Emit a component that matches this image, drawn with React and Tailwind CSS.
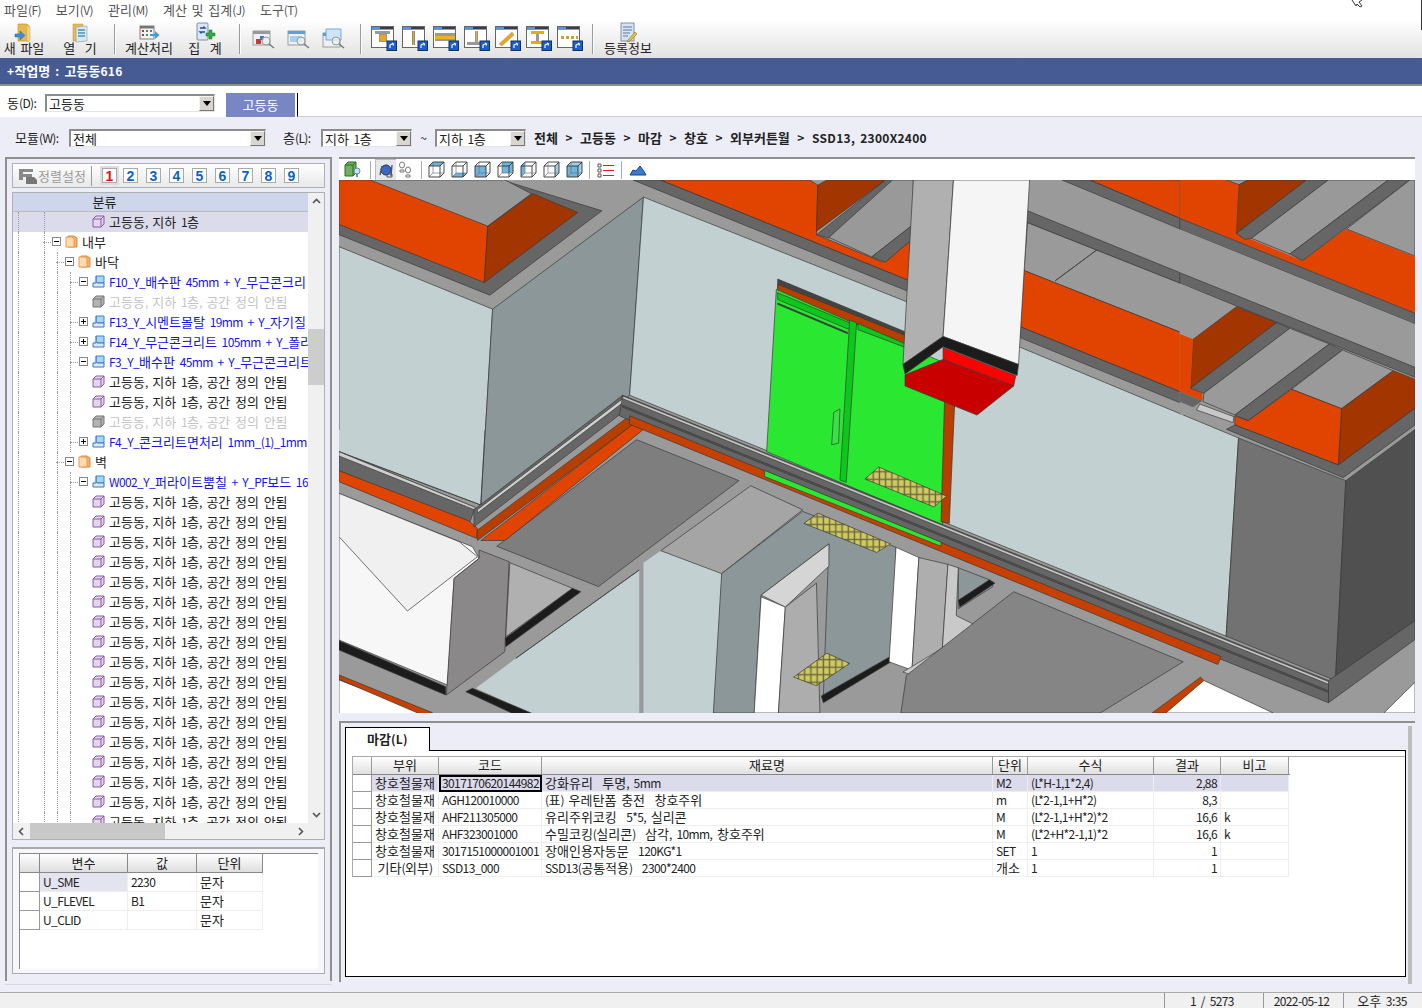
import React from "react";

// Korean at 13px is 12px wide per glyph, latin squeezed down to half of that
const T = ({ children, bold }) =>
  String(children)
    .split(/([\uAC00-\uD7A3]+)/)
    .map((part, i) =>
      i % 2 ? (
        <span key={i} className="text-[13px]">{part}</span>
      ) : (
        <span key={i} className={bold ? "tracking-[0.3px] [word-spacing:2px]" : "tracking-[-0.6px] [word-spacing:2.6px]"}>{part}</span>
      )
    );

const Combo = ({ label, w }) => (
  <div className={`flex h-[18px] items-stretch border border-t-2 border-l-2 border-[#8c8c8c] border-b-[#e4e4e4] border-r-[#e4e4e4] bg-white ${w}`}>
    <span className="flex-1 pl-[2px] leading-[15px] whitespace-nowrap"><T>{label}</T></span>
    <span className="flex w-[15px] items-center justify-center bg-[#d8d6cf] border border-[#f4f4f4] border-r-[#777] border-b-[#777]">
      <span className="block h-0 w-0 border-x-[4px] border-t-[5px] border-x-transparent border-t-black" />
    </span>
  </div>
);

const Sep = () => <div className="h-[30px] w-[2px] border-l border-[#9a9a9a] bg-white" />;

const Chevron = ({ d }) => (
  <svg width="9" height="9" viewBox="0 0 9 9">
    <path d={d} fill="none" stroke="#555" strokeWidth="1.600" />
  </svg>
);

const NewFileIcon = () => (
  <svg width="22" height="22" viewBox="0 0 22 22">
    <path d="M5 2h9l2 2v15H5z" fill="#e8b850" stroke="#c08a20" strokeWidth=".6" />
    <path d="M14 3l3 2v13l-3 2z" fill="#f4d68a" stroke="#c9a050" strokeWidth=".5" />
    <path d="M2 12h5V9l5 4.500L7 18v-3H2z" fill="#3d8fdc" stroke="#1f66a8" strokeWidth=".5" />
  </svg>
);

const OpenIcon = () => (
  <svg width="22" height="22" viewBox="0 0 22 22">
    <path d="M4 2h10v17H4z" fill="#e6b95a" stroke="#c09030" strokeWidth=".5" />
    <path d="M7 5l11-1v15l-11 1z" fill="#d8e8ec" stroke="#8aa0a8" strokeWidth=".6" />
    <path d="M9 7h7v2H9zm0 3h7v2H9zm0 3h7v2H9z" fill="#68a8c8" />
  </svg>
);

const CalcIcon = () => (
  <svg width="24" height="22" viewBox="0 0 24 22">
    <rect x="3" y="4" width="14" height="13" fill="#f4f4f4" stroke="#666" strokeWidth=".8" />
    <path d="M3 4h14v2.500H3z" fill="#777" />
    <path d="M5 8h2v2H5zM5 12h2v2H5z" fill="#c03030" />
    <path d="M9 8h2v2H9zM9 12h2v2H9z" fill="#3a9a4a" />
    <path d="M13 8h2v2h-2z" fill="#6868c0" />
    <path d="M13 12h5v-3l4.500 4-4.500 4v-3h-5z" fill="#3d9be0" />
  </svg>
);

const SumIcon = () => (
  <svg width="22" height="22" viewBox="0 0 22 22">
    <rect x="3" y="1" width="11" height="17" rx="1" fill="#dce6f4" stroke="#6a7890" strokeWidth=".8" />
    <path d="M6 6h5l-1.500-1.500M11 10H6l1.500 1.500" fill="none" stroke="#1a4fb0" strokeWidth="1.300" />
    <path d="M12 11h3V8h3v3h3v3h-3v3h-3v-3h-3z" fill="#28b040" stroke="#14702a" strokeWidth=".5" />
  </svg>
);

const SearchWin = ({ kind }) => (
  <svg width="24" height="22" viewBox="0 0 24 22">
    <rect x="1" y={kind === 2 ? 5 : 3} width="17" height="14" fill="#eef0f2" stroke="#888" strokeWidth=".8" />
    <path d={kind === 2 ? "M1 5h17v3H1z" : "M1 3h17v3H1z"} fill={kind === 0 ? "#999" : "#5aa0dc"} />
    {kind === 0 && <path d="M4 11h5v5H4z" fill="#c83838" />}
    {kind === 0 && <path d="M8 8h4v4H8z" fill="#3a78c8" />}
    {kind === 1 && <path d="M3 8h12v6H3z" fill="#a8cfee" />}
    {kind === 2 && <path d="M4 1h15v11H4z" fill="#cfe4f6" stroke="#4a90d0" strokeWidth=".7" />}
    <circle cx="14" cy="13" r="4" fill="#e8f0e8" fillOpacity=".8" stroke="#999" />
    <path d="M17 16l5 4" stroke="#777" strokeWidth="1.500" />
  </svg>
);

const MemberIcon = ({ children }) => (
  <svg width="26" height="27" viewBox="0 0 26 27">
    <rect x=".5" y=".5" width="22" height="21" fill="#fff" stroke="#666" />
    <path d="M1 1h21v2.500H1z" fill="#3a3a4a" />
    <path d="M1 1h8v2.500H1z" fill="#5a90d8" />
    {children}
    <rect x="16" y="15" width="9.500" height="9.500" fill="#1d5fc8" stroke="#12305c" />
    <path d="M19 22l0-3 3-1.500M21 17l1.500 1-.5 1.500" fill="none" stroke="#fff" strokeWidth="1.100" />
  </svg>
);

const memberIcons = [
  <>
    <path d="M4 5h15v3H4zM8 8h8v8H8z" fill="#999" />
    <path d="M9 9h6v6H9z" fill="#e8a818" />
  </>,
  <>
    <path d="M10 5h3v14h-3z" fill="#8a8a8a" />
    <path d="M11 5h1v14h-1z" fill="#e8a818" />
  </>,
  <>
    <path d="M2 7h20v3H2zM2 12h20v3H2z" fill="#999" />
    <path d="M2 10h20v3H2z" fill="#f0b020" />
  </>,
  <>
    <path d="M11 5h3v11h-3zM3 16h18v3H3z" fill="#999" />
    <path d="M12 5h1v11h-1z" fill="#e8a818" />
  </>,
  <path d="M4 18L17 6l2 3L7 20z" fill="#e8a818" stroke="#999" strokeWidth=".5" />,
  <>
    <path d="M5 5h13v3H5zM5 15h13v3H5z" fill="#e8a818" />
    <path d="M10 8h3v7h-3z" fill="#999" />
  </>,
  <path d="M4 10h3v3H4zm5 0h3v3H9zm5 0h3v3h-3zm5 0h2v3h-2z" fill="#c8a048" />,
];

const RegisterIcon = () => (
  <svg width="22" height="22" viewBox="0 0 22 22">
    <rect x="4" y="1" width="13" height="18" fill="#d8e4f2" stroke="#6a7a90" strokeWidth=".8" />
    <path d="M6 5h9M6 8h9M6 11h7M6 14h5" stroke="#5878a0" />
    <path d="M11 18l7-8 2 2-7 7-3 1z" fill="#e8c040" stroke="#806010" strokeWidth=".5" />
  </svg>
);

const TextBtn = ({ icon, label, cls }) => (
  <div className={`flex w-[48px] flex-col items-center whitespace-pre ${cls}`}>
    <div className="flex h-[19px] items-center">{icon}</div>
    <span className="-mt-px leading-[14px]"><T>{label}</T></span>
  </div>
);

const Toolbar = () => (
  <div className="flex h-[38px] shrink-0 items-center bg-gradient-to-b from-white to-[#e2e2e2]">
    <TextBtn icon={<NewFileIcon />} label="새 파일" />
    <TextBtn icon={<OpenIcon />} label={"열  기"} cls="ml-[8px]" />
    <div className="ml-[10px]"><Sep /></div>
    <TextBtn icon={<CalcIcon />} label="계산처리" cls="ml-[9px]" />
    <TextBtn icon={<SumIcon />} label={"집  계"} cls="ml-[8px]" />
    <div className="ml-[10px]"><Sep /></div>
    <div className="ml-[11px] flex gap-[11px]">
      <SearchWin kind={0} />
      <SearchWin kind={1} />
      <SearchWin kind={2} />
    </div>
    <div className="ml-[14px]"><Sep /></div>
    <div className="ml-[9px] flex gap-[5px]">
      {memberIcons.map((m, i) => (
        <MemberIcon key={i}>{m}</MemberIcon>
      ))}
    </div>
    <div className="ml-[9px]"><Sep /></div>
    <TextBtn icon={<RegisterIcon />} label="등록정보" cls="ml-[10px]" />
  </div>
);

const Cube = ({ face }) => {
  const blue = "#6fb4dc";
  return (
    <svg width="17" height="17" viewBox="0 0 17 17">
      <path d="M1 5h11v11H1z" fill={face === "front" || face === "all" ? blue : "none"} />
      <path d="M1 5l4-4h11l-4 4z" fill={face === "top" ? blue : face === "all" ? "#9fd0ea" : "none"} />
      <path d="M12 5l4-4v11l-4 4z" fill={face === "right" || face === "all" ? "#9fd0ea" : "none"} />
      <path d="M1 16l4-4h11l-4 4z" fill={face === "bottom" ? blue : "none"} />
      <path d="M5 1h11v11H5z" fill={face === "back" ? blue : "none"} />
      <path d="M1 5v11l4-4V1z" fill={face === "left" ? blue : "none"} />
      <path d="M1 5h11v11H1zM1 5l4-4h11v11l-4 4M12 5l4-4" fill="none" stroke="#333" strokeWidth=".9" />
      <path d="M5 1v11H16M5 12l-4 4" fill="none" stroke="#666" strokeWidth=".6" />
    </svg>
  );
};

const ViewToolbar = () => (
  <div className="flex h-[23px] shrink-0 items-center bg-white border-t-2 border-[#8f8f8f]">
    <svg width="18" height="18" viewBox="0 0 18 18" className="ml-[5px]">
      <path d="M1 4l3-3h8v11l-3 3H1z" fill="#6fb060" stroke="#2a6a24" />
      <path d="M1 4h8v11M9 4l3-3" fill="none" stroke="#2a6a24" />
      <circle cx="13" cy="10" r="3" fill="#cde4f4" stroke="#5a88b0" />
      <path d="M12 13h2v3h-2z" fill="#888" />
    </svg>
    <div className="ml-[8px] h-[18px] border-l border-[#aaa]" />
    <div className="flex h-[21px] w-[21px] ml-[4px] items-center justify-center bg-[#e8e8e8] border-l border-t border-[#bbb]">
      <svg width="18" height="18" viewBox="0 0 18 18">
        <circle cx="9" cy="9" r="5" fill="#3a6ac8" stroke="#1a3070" />
        <path d="M3 14l2-9M15 4l-1 11" fill="none" stroke="#555" strokeWidth="1.400" />
        <path d="M10 13h5v3h-5z" fill="none" stroke="#555" />
      </svg>
    </div>
    <svg width="16" height="18" viewBox="0 0 16 18" className="ml-[1px]">
      <ellipse cx="5" cy="4" rx="2.500" ry="3" fill="none" stroke="#777" />
      <path d="M3 9h4v2H3z" fill="none" stroke="#777" />
      <ellipse cx="11" cy="9" rx="2.500" ry="3" fill="none" stroke="#777" />
      <path d="M9 14h4v2H9z" fill="none" stroke="#777" />
    </svg>
    <div className="ml-[8px] h-[18px] border-l border-[#aaa]" />
    <div className="ml-[6px] flex gap-[6px]">
      {["top", "bottom", "front", "back", "left", "right", "all"].map((f) => (
        <Cube key={f} face={f} />
      ))}
    </div>
    <div className="ml-[6px] h-[18px] border-l border-[#aaa]" />
    <svg width="18" height="16" viewBox="0 0 18 16" className="ml-[7px]">
      <path d="M1 2h3v3H1zM1 7h3v3H1zM1 12h3v3H1z" fill="none" stroke="#555" />
      <path d="M6 3.500h11M6 8.500h11M6 13.500h11" stroke="#e02020" />
    </svg>
    <div className="ml-[6px] h-[18px] border-l border-[#aaa]" />
    <svg width="18" height="12" viewBox="0 0 18 12" className="ml-[7px]">
      <path d="M1 11l3-5 3 1 4-5 3 4 3 5z" fill="#3a7ad0" stroke="#14408c" />
    </svg>
  </div>
);

const Box = ({ open }) => (
  <span className="relative z-10 flex h-[9px] w-[9px] items-center justify-center border border-[#888] bg-white">
    <span className="absolute h-px w-[5px] bg-black" />
    {!open && <span className="absolute h-[5px] w-px bg-black" />}
  </span>
);

const Leaf = ({ grey }) => (
  <svg width="13" height="13" viewBox="0 0 13 13">
    <path d="M1 4l3-3h8v8l-3 3H1z" fill={grey ? "#b4b4b4" : "#e4d4f0"} stroke={grey ? "#777" : "#8a5aa0"} />
    <path d="M1 4h8v8M9 4l3-3" fill="none" stroke={grey ? "#777" : "#8a5aa0"} />
  </svg>
);

const Folder = () => (
  <svg width="13" height="13" viewBox="0 0 13 13">
    <path d="M3 1h6l3 2v9H3z" fill="#f4b070" stroke="#e08840" />
    <path d="M1 2h6l2 2v8H1z" fill="#ffdcb0" stroke="#ec9850" />
  </svg>
);

const Layer = () => (
  <svg width="13" height="13" viewBox="0 0 13 13">
    <path d="M4 1h8v7H4z" fill="#a8d4f4" stroke="#3a88c8" />
    <path d="M1 8h3V1M1 8v4h11V8H5" fill="#dbe6f6" stroke="#3a78b8" />
  </svg>
);

const L = "고등동, 지하 1층, 공간 정의 안됨";
const treeRows = [
  { t: "고등동, 지하 1층", k: "leaf", sel: true, g: [18, 44] },
  { t: "내부", k: "folder", x: 39, open: true, g: [18, 44] },
  { t: "바닥", k: "folder", x: 52, open: true, g: [18, 44, 57] },
  { t: "F10_Y_배수판 45mm + Y_무근콘크리", k: "layer", x: 66, open: true },
  { t: L, k: "leaf", grey: true },
  { t: "F13_Y_시멘트몰탈 19mm + Y_자기질", k: "layer", x: 66 },
  { t: "F14_Y_무근콘크리트 105mm + Y_폴리", k: "layer", x: 66 },
  { t: "F3_Y_배수판 45mm + Y_무근콘크리트", k: "layer", x: 66, open: true },
  { t: L, k: "leaf" },
  { t: L, k: "leaf" },
  { t: L, k: "leaf", grey: true },
  { t: "F4_Y_콘크리트면처리 1mm_(1)_1mm", k: "layer", x: 66 },
  { t: "벽", k: "folder", x: 52, open: true, g: [18, 44, 57] },
  { t: "W002_Y_퍼라이트뿜칠 + Y_PF보드 16", k: "layer", x: 66, open: true },
  ...Array.from({ length: 17 }, () => ({ t: L, k: "leaf" })),
];

const TreeRow = ({ r }) => {
  const guides = r.g || [18, 44, 57, 70];
  const isBranch = r.k !== "leaf";
  const iconLeft = r.k === "leaf" ? 79 : r.x + 13;
  return (
    <div className={`relative flex h-[20px] shrink-0 items-center whitespace-nowrap ${r.sel ? "bg-[#dbdbec]" : ""}`}>
      {guides.map((x) => (
        <span
          key={x}
          className="absolute top-0 h-[20px] border-l border-dotted border-[#999]"
          style={{ left: x - 13 }}
        />
      ))}
      {isBranch && (
        <span className="absolute top-[10px] w-[10px] border-t border-dotted border-[#999]" style={{ left: r.x - 9 }} />
      )}
      {isBranch && (
        <span className="absolute top-[5px]" style={{ left: r.x }}>
          <Box open={r.open} />
        </span>
      )}
      <span className="absolute top-[3px]" style={{ left: iconLeft }}>
        {r.k === "leaf" && <Leaf grey={r.grey} />}
        {r.k === "folder" && <Folder />}
        {r.k === "layer" && <Layer />}
      </span>
      <span
        className={`absolute ${r.grey ? "text-[#c4c4c4]" : r.k === "layer" ? "text-[#1414e0]" : "text-[#222]"}`}
        style={{ left: iconLeft + 17 }}
      >
        <T>{r.t}</T>
      </span>
    </div>
  );
};

const LeftPanel = () => (
  <div className="flex h-[824px] w-[327px] shrink-0 flex-col border-x-2 border-t-2 border-[#8f8f8f] px-[5px] pt-[4px]">
    <div className="flex h-[25px] shrink-0 items-center border border-[#b0b0b0] bg-gradient-to-b from-white to-[#e8e8e8] pl-[5px]">
      <svg width="20" height="18" viewBox="0 0 20 18">
        <path d="M1 2h14v3H5v2h9v3H5v3H1z" fill="#888" />
        <path d="M8 10h8l3 3v4H8z" fill="#777" />
      </svg>
      <span className="w-[48px] text-[#9a9a9a]"><T>정렬설정</T></span>
      <div className="ml-[5px] h-[20px] border-l border-[#999]" />
      <div className="ml-[10px] flex items-center gap-[8px]">
        {[1, 2, 3, 4, 5, 6, 7, 8, 9].map((n) => (
          <span
            key={n}
            className={`flex h-[15px] w-[15px] items-center justify-center border border-[#aaa] bg-white font-['Liberation_Sans',sans-serif] text-[14px] font-bold ${n === 1 ? "-mr-[2px] text-[#e81010] outline-2 outline-[#ddd]" : "text-[#0a64c0]"}`}
          >
            {n}
          </span>
        ))}
      </div>
    </div>
    <div className="mt-[4px] flex h-[648px] shrink-0 flex-col border border-[#b0b0b0] bg-[#f0f0f0]">
      <div className="flex min-h-0 flex-1">
        <div className="flex min-w-0 flex-1 flex-col overflow-hidden bg-white">
          <div className="flex h-[19px] shrink-0 items-center justify-center bg-[#cdd6ea] pr-[112px] border-b border-[#bbb]"><span><T>분류</T></span></div>
          {treeRows.map((r, i) => (
            <TreeRow key={i} r={r} />
          ))}
        </div>
        <div className="relative flex w-[16px] shrink-0 flex-col items-center justify-between bg-[#f0f0f0] py-[4px]">
          <Chevron d="M1 6l3.500-3.500L8 6" />
          <span className="absolute left-0 top-[136px] h-[56px] w-[16px] bg-[#cdcdcd]" />
          <Chevron d="M1 3l3.500 3.500L8 3" />
        </div>
      </div>
      <div className="flex h-[16px] shrink-0 items-center bg-[#f0f0f0]">
        <span className="flex w-[17px] justify-center"><Chevron d="M6 1L2.500 4.500 6 8" /></span>
        <span className="h-[16px] w-[135px] bg-[#c8c8c8]" />
        <span className="ml-auto mr-[19px] flex"><Chevron d="M3 1l3.500 3.500L3 8" /></span>
      </div>
    </div>
    <div className="mt-[7px] h-[127px] shrink-0 border-t-2 border-l border-r border-b border-[#aaa] bg-[#f6f6fb] px-[6px] pt-[4px]">
      <div className="h-[116px] border-l border-t border-[#888] bg-white">
        <div className="grid w-[243px] grid-cols-[20px_88px_69px_66px]">
          {["", "변수", "값", "단위"].map((h, i) => (
            <div key={i} className="flex h-[19px] items-center justify-center bg-gradient-to-b from-white to-[#dedede] border-r border-b border-[#888]"><span><T>{h}</T></span></div>
          ))}
          {[
            ["U_SME", "2230", "문자"],
            ["U_FLEVEL", "B1", "문자"],
            ["U_CLID", "", "문자"],
          ].map((r, i) => (
            <React.Fragment key={i}>
              <div className="h-[19px] border-r border-b border-[#999]" />
              <div className={`flex h-[19px] items-center border-r border-b border-[#eee] pl-[3px] ${i === 0 ? "bg-[#e4e4f0]" : ""}`}><span><T>{r[0]}</T></span></div>
              <div className="flex h-[19px] items-center border-r border-b border-[#eee] pl-[3px]"><span><T>{r[1]}</T></span></div>
              <div className="flex h-[19px] items-center border-r border-b border-[#eee] pl-[3px]"><span><T>{r[2]}</T></span></div>
            </React.Fragment>
          ))}
        </div>
      </div>
    </div>
  </div>
);

const P = ({ p, f, s }) => (
  <polygon points={p} fill={f} stroke={s === false ? "none" : "#3a3a3a"} strokeWidth=".7" vectorEffect="non-scaling-stroke" />
);

const drawList = (list) => list.map(([p, f, s], i) => <P key={i} p={p} f={f} s={s} />);

const wallShapes = [
  ["235,0 380,90 218,337 0,160 0,0", "#666"],
  ["0,0 60,0 215,135 210,300 0,130", "#e04400"],
  ["45,0 240,0 278,40 215,135 45,0", "#999"],
  ["215,135 280,40 345,95 210,300", "#a33600"],
  ["425,0 465,0 825,295 825,328", "#666"],
  ["465,0 680,0 692,15 690,160 785,240 825,180 825,295", "#e04400"],
  ["692,15 705,0 790,0 690,150", "#a33600"],
  ["790,0 810,0 708,170 690,160", "#666"],
  ["800,0 830,0 830,130 770,225 708,168", "#999"],
  ["770,225 830,130 830,170 790,240", "#666"],
  ["1085,0 1215,0 1215,112", "#e04400"],
  ["1045,0 1085,0 1215,112 1215,143", "#666"],
  ["995,90 1215,271 1215,302 995,125", "#666"],
  ["995,125 1300,370 1240,465 990,265", "#9a9a9a"],
  ["1095,205 1035,295", "none"],
  ["990,265 1240,465 1235,605 1252,622 1252,650 985,430", "#e04400"],
  ["985,430 1252,650 1252,682 985,462", "#666"],
  ["0,195 222,378 205,955 0,795", "#c2d0d2"],
  ["222,378 440,50 420,630 205,955", "#8c9799"],
  ["440,50 825,360 985,490 1300,755 1282,1335 420,630", "#c2d0d2"],
];

// lower left corner, in 3x page pixels from (340,430)
const cornerShapes = [
  ["0,0 438,0 425,225 0,65", "#c2d0d2", false],
  ["438,0 720,0 425,225", "#8c9799", false],
  ["0,65 425,225", "none"],
  ["438,0 425,225", "none"],
  ["0,65 408,232 388,288 0,122", "#666"],
  ["0,65 408,232 408,240 0,78", "#cfcfcf"],
  ["0,122 388,272 415,295 412,325 0,155", "#e04400"],
  ["0,190 400,350 420,385 345,445 325,765 0,630", "#f7f7f7"],
  ["0,320 205,543 415,380 360,335 0,190", "#f0f0f0"],
  ["420,360 510,395 497,665 322,795 345,445 420,385", "#8a8888"],
  ["512,398 700,475 500,620", "#b0b0b0"],
  ["700,475 725,485 500,650 498,625", "#1c1c1c"],
  ["900,420 900,855 590,855 410,775 530,685", "#c2d0d2", false],
  ["900,420 530,685", "none"],
  ["0,632 320,770 320,795 0,660", "#1c1c1c"],
  ["380,785 400,775 590,855 530,855", "#1c1c1c"],
  ["0,750 280,855 0,855", "#fff"],
  ["0,735 280,848 250,855 0,748", "#c84000"],
];

// upper right corner, in 3x page pixels from (1180,180)
const roofShapes = [
  ["0,0 145,0 178,14 170,160 368,242 497,147 705,230 705,400 0,115", "#e04400", false],
  ["140,0 205,0 178,14", "#999"],
  ["178,14 205,0 380,0 170,160", "#a33600"],
  ["380,0 445,0 215,175 195,178 170,160", "#666"],
  ["445,0 625,0 330,222 215,175", "#999"],
  ["625,0 690,0 368,242 330,222", "#666"],
  ["690,0 705,0 705,228 500,147", "#999"],
  ["0,115 705,400 705,432 0,148", "#666"],
  ["0,148 705,432 705,562 0,278", "#9a9a9a", false],
  ["0,278 705,562 705,592 0,310", "#666"],
  ["0,310 170,380 40,478 0,462", "#9a9a9a", false],
  ["170,380 290,428 32,625 40,478", "#a33600"],
  ["0,462 40,478 32,625 68,640 68,662 0,635", "#e04400", false],
  ["290,428 330,445 72,640 32,625", "#666"],
  ["330,445 448,492 165,705 70,665 72,640", "#9a9a9a"],
  ["448,492 488,510 205,722 165,705", "#666"],
  ["488,510 640,572 485,686 335,628", "#9a9a9a"],
  ["640,572 705,598 705,685 475,855 485,686", "#a33600"],
  ["335,628 485,686 475,855 165,735 165,708 205,722", "#e04400"],
  ["705,685 705,735 490,893 140,748 165,735 475,855", "#666"],
  ["50,690 60,672 162,710 160,728", "#c8c8c8"],
  ["0,635 68,662 40,682 0,665", "#666", false],
];

const shapes = [
  // door
  ["634,290 825,450 825,480 634,320", "#444"],
  ["634,305 825,460 825,490 634,335", "#b83e00"],
  ["632,320 880,540 890,640 872,1010 618,795", "#2ae832"],
  ["634,330 740,420 740,440 634,350", "#0cc81a"],
  ["634,360 735,446 735,450 634,364", "#333"],
  ["750,420 825,485 825,495 750,438", "#0cc81a"],
  ["875,650 890,640 882,1005 870,1000", "#b83e00"],
  ["738,410 748,418 733,885 724,878", "#0cc81a"],
  ["715,680 724,670 722,770 712,775", "#3be048"],
  // right grey box
  ["1300,755 1455,880 1440,1465 1282,1335", "#727272"],
  ["1455,880 1555,730 1555,1290 1440,1465", "#505050"],
  ["1430,1465 1555,1290 1555,1345 1430,1530", "#666"],
  // pale floor and column beside the door
  ["465,1085 553,1152 541,1560 440,1560 440,1120", "#c2d0d2", false],
  ["595,895 670,965 553,1152 465,1085", "#a5a5a5"],
  ["553,1152 670,970 805,1075 800,1400 700,1510 708,1065 610,1215 600,1560 541,1560", "#8c9799"],
  ["805,1385 810,1395 700,1530 697,1510", "#1c1c1c"],
  ["610,1215 708,1065 708,1130 645,1250", "#d5d5d5"],
  ["610,1220 645,1250 635,1560 600,1560", "#fff"],
  ["645,1250 690,1180 695,1560 635,1560", "#adadad"],
  // lower centre
  ["805,1075 838,1105 828,1435 795,1410", "#fff"],
  ["838,1105 880,1125 872,1370 828,1435", "#aeaeae"],
  ["895,1135 940,1170 945,1190 895,1255", "#8c9799"],
  ["940,1170 948,1180 897,1250 895,1230", "#1c1c1c"],
  ["880,1125 895,1135 892,1275 922,1305 828,1450 815,1440 872,1370", "#c9c9c9"],
  ["975,1205 1220,1410 1100,1560 812,1560 820,1450", "#858585"],
  ["1245,1455 1175,1560 1195,1560 1250,1465", "#c84000"],
  ["1250,1465 1350,1560 1195,1560", "#fff"],
  ["1555,1470 1510,1560 1555,1560", "#fff"],
  // floor panel
  ["430,760 578,880 375,1190 228,1072", "#7e7e7e"],
  // left ledge, runs up past the corner group
  ["410,630 195,965 195,1015 410,680", "#666"],
  ["410,640 200,965 200,975 410,652", "#cfcfcf"],
  ["420,690 200,1025 200,1055 425,715", "#b83e00"],
  ["425,715 205,1055 240,1055 440,730", "#e04400"],
  // ledge
  ["410,630 1430,1465 1430,1530 405,690", "#666"],
  ["410,632 1430,1468 1430,1476 410,640", "#c4c4c4"],
  ["410,660 1430,1495 1430,1500 410,665", "#555"],
  ["420,690 1275,1395 1270,1418 420,715", "#c84000"],
  ["615,850 870,1060 870,1072 615,868", "#2ae832"],
  // duct
  ["830,0 888,0 873,458 815,540", "#b0b0b0"],
  ["888,0 998,0 982,540 873,458", "#f5f5f5"],
  ["815,540 873,458 982,540 980,572 873,488 818,568", "#1c1c1c"],
  ["873,490 978,573 975,603 873,525", "#ff0000"],
  ["873,525 975,603 922,688 818,603 818,570", "#c80000"],
];

const Viewport = () => (
  <svg viewBox="0 0 1555 1560" preserveAspectRatio="none" className="block h-[533px] w-full">
    <defs>
      <pattern id="dots" width="9" height="22" patternUnits="userSpaceOnUse">
        <rect width="9" height="22" fill="#d0c860" />
        <rect x="6" width="2" height="22" fill="#6a6a40" />
        <rect y="16" width="9" height="4" fill="#6a6a40" />
      </pattern>
    </defs>
    <rect width="1555" height="1560" fill="#9a9a9a" />
    {drawList(wallShapes)}
    <g transform="scale(1.4465 2.927) translate(0 250) scale(.3333)">
      <rect width="900" height="855" fill="#9a9a9a" />
      {drawList(cornerShapes)}
    </g>
    {drawList(shapes)}
    <g transform="scale(1.4465 2.927) translate(840 0) scale(.3333)">
      <rect x="0" width="720" height="705" fill="#9a9a9a" />
      {drawList(roofShapes)}
    </g>
    <P p="760,875 780,840 878,925 860,957" f="url(#dots)" />
    <P p="672,1005 692,975 797,1065 777,1090" f="url(#dots)" />
    <P p="657,1455 705,1385 738,1415 690,1480" f="url(#dots)" />
  </svg>
);

const cols = [
  ["", 19],
  ["부위", 67],
  ["코드", 103],
  ["재료명", 451],
  ["단위", 35],
  ["수식", 126],
  ["결과", 67],
  ["비고", 68],
];
const rows = [
  ["창호철물재", "3017170620144982", "강화유리  투명, 5mm", "M2", "(L*H-1,1*2,4)", "2,88", ""],
  ["창호철물재", "AGH120010000", "(표) 우레탄폼 충전  창호주위", "m", "(L*2-1,1+H*2)", "8,3", ""],
  ["창호철물재", "AHF211305000", "유리주위코킹  5*5, 실리콘", "M", "(L*2-1,1+H*2)*2", "16,6", "k"],
  ["창호철물재", "AHF323001000", "수밀코킹(실리콘)  삼각, 10mm, 창호주위", "M", "(L*2+H*2-1,1)*2", "16,6", "k"],
  ["창호철물재", "3017151000001001", "장애인용자동문  120KG*1", "SET", "1", "1", ""],
  ["기타(외부)", "SSD13_000", "SSD13(공통적용)  2300*2400", "개소", "1", "1", ""],
];

const BottomPanel = () => (
  <div className="mt-[8px] flex h-[261px] flex-col border-t-2 border-l-2 border-[#8f8f8f] pl-[4px] pt-[4px]">
    <div className="flex h-[23px] shrink-0">
      <div className="z-10 -mb-px flex w-[85px] items-center justify-center border border-b-0 border-black bg-white pb-[2px] font-bold"><span><T bold>마감(L)</T></span></div>
    </div>
    <div className="flex">
      <div className="h-[227px] w-[1061px] border border-black bg-white pl-[6px] pt-[5px]">
        <div className="border-t border-l border-[#aaa]">
          <div className="flex w-[937px] border-b border-[#888]">
            {cols.map(([h, w]) => (
              <div key={h} style={{ width: w }} className="flex h-[17px] shrink-0 items-center justify-center border-r border-[#999] bg-gradient-to-b from-white to-[#e0e0e0] pb-[2px]"><span><T>{h}</T></span></div>
            ))}
          </div>
          {rows.map((r, i) => (
            <div key={i} className="flex h-[17px] w-[937px] whitespace-pre">
              <div className="w-[19px] shrink-0 border-r border-b border-[#999]" />
              {r.map((c, j) => (
                <div
                  key={j}
                  style={{ width: cols[j + 1][1] }}
                  className={`flex shrink-0 items-center border-r border-b border-[#eee] px-[3px] ${i === 0 ? "bg-[#dbdbec]" : ""} ${j === 0 ? "justify-center" : ""} ${j === 5 ? "justify-end" : ""} ${i === 0 && j === 1 ? "outline-2 -outline-offset-2 outline-black" : ""}`}
                >
                  <span><T>{c}</T></span>
                </div>
              ))}
            </div>
          ))}
        </div>
      </div>
      <div className="ml-[2px] -mt-[24px] h-[258px] w-[4px] bg-[#bdbdbd]" />
    </div>
  </div>
);

const crumbs = ["전체", "고등동", "마감", "창호", "외부커튼월", "SSD13, 2300X2400"];

export default function App() {
  return (
    <div className="relative flex h-[1008px] w-[1422px] flex-col overflow-hidden bg-[#ecedf7] font-['Noto_Sans_CJK_KR',sans-serif] text-[12px] leading-[14px] text-[#222]">
      <div className="flex h-[20px] shrink-0 items-center gap-[15px] bg-white pl-[4px] text-[#555]">
        <span><T>파일(F)</T></span>
        <span><T>보기(V)</T></span>
        <span><T>관리(M)</T></span>
        <span><T>계산 및 집계(J)</T></span>
        <span><T>도구(T)</T></span>
      </div>
      <Toolbar />
      <div className="flex h-[28px] shrink-0 items-center bg-[#465b94] border-b-2 border-[#8f8f8f] pl-[7px] font-bold text-white"><span><T bold>+작업명 : 고등동616</T></span></div>
      <div className="flex h-[31px] shrink-0 items-end bg-white">
        <div className="mb-[5px] ml-[7px] flex items-center">
          <span className="w-[38px]"><T>동(D):</T></span>
          <Combo label="고등동" w="w-[170px]" />
        </div>
        <div className="ml-[11px] flex h-[24px] w-[69px] items-center justify-center bg-[#7887c4] text-white"><span><T>고등동</T></span></div>
        <div className="ml-[2px] h-[24px] w-[1125px] border-l border-b border-l-black border-b-[#ccc]" />
      </div>
      <div className="flex h-[40px] shrink-0 items-center pl-[15px] pt-[1px]">
        <span className="w-[54px]"><T>모듈(W):</T></span>
        <Combo label="전체" w="w-[197px]" />
        <span className="ml-[17px] w-[38px]"><T>층(L):</T></span>
        <Combo label="지하 1층" w="w-[91px]" />
        <span className="w-[23px] text-center">~</span>
        <Combo label="지하 1층" w="w-[91px]" />
        <div className="ml-[8px] flex items-center gap-[6px] font-bold whitespace-pre">
          {crumbs.map((c, i) => (
            <React.Fragment key={c}>
              {i > 0 && <span className="px-[1.5px]">&gt;</span>}
              <span><T bold>{c}</T></span>
            </React.Fragment>
          ))}
        </div>
      </div>
      <div className="flex min-h-0 flex-1 pl-[5px]">
        <div className="flex flex-col">
          <LeftPanel />
          <div className="mt-[3px] w-[327px] border-t border-[#d8d8e4]" />
        </div>
        <div className="ml-[7px] flex w-[1076px] flex-col">
          <ViewToolbar />
          <Viewport />
          <BottomPanel />
        </div>
      </div>
      <div className="flex h-[16px] shrink-0 justify-end gap-[4px] bg-[#f0f0f0] border-t border-[#aaa] pr-[2px]">
        <div className="flex w-[95px] items-center justify-center border-l border-[#999]"><span><T>1 / 5273</T></span></div>
        <div className="flex w-[76px] items-center justify-center border-l border-[#999]"><span><T>2022-05-12</T></span></div>
        <div className="flex w-[77px] items-center justify-center border-l border-[#999]"><span><T>오후 3:35</T></span></div>
      </div>
      <div className="absolute right-0 top-0 h-[30px] w-px bg-[#333]" />
      <svg width="14" height="8" viewBox="0 0 14 8" className="absolute left-[1351px] top-0">
        <path d="M1 0l4 6 1-2 3 3 2-1-3-4 3-2" fill="#fff" stroke="#333" />
      </svg>
    </div>
  );
}
